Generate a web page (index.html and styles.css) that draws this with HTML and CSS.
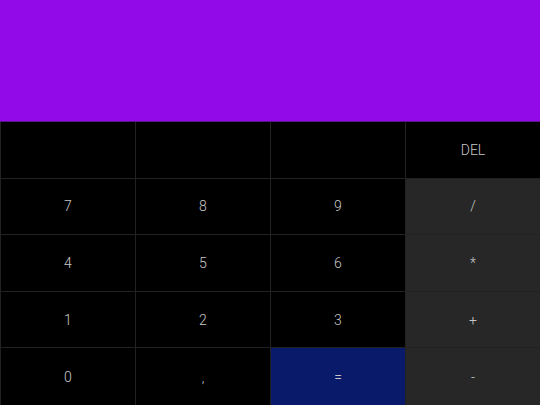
FILE: index.html
```html
<!DOCTYPE html>
<html lang="en">
<head>
    <meta charset="UTF-8">
    <meta name="viewport" content="width=device-width, initial-scale=1.0">
    <title>Calculator</title>
    <link rel="stylesheet" href="styles.css">
</head>
<body>
    <div class="calc">
        <div class="display"></div>

        <div class="keys">
            <div class="key"></div>
            <div class="key"></div>
            <div class="key"></div>
            <div class="key">DEL</div>

            <div class="key">7</div>
            <div class="key">8</div>
            <div class="key">9</div>
            <div class="key op">/</div>

            <div class="key">4</div>
            <div class="key">5</div>
            <div class="key">6</div>
            <div class="key op">*</div>

            <div class="key">1</div>
            <div class="key">2</div>
            <div class="key">3</div>
            <div class="key op">+</div>

            <div class="key">0</div>
            <div class="key">,</div>
            <div class="key equal">=</div>
            <div class="key op">-</div>
        </div>
    </div>
</body>
</html>
```

FILE: styles.css
```css
*{
    margin: 0;
    padding: 0;
    box-sizing: border-box;
}
html, body{
    width: 540px;
    height: 405px;
    background: #000;
    overflow: hidden;
}
.calc{
    height: 405px;
    display: flex;
    flex-direction: column;
    font-family: Roboto, "Liberation Sans", sans-serif;
}
.display{
    height: 122px;
    background: #930ae8;
    border-bottom: 1px solid #5c1488;
}
.keys{
    flex: 1;
    display: grid;
    grid-template-columns: repeat(4, 1fr);
    grid-template-rows: repeat(5, 1fr);
}
.key{
    display: flex;
    align-items: center;
    justify-content: center;
    background: #000;
    color: #c8c8c8;
    font-size: 14px;
    font-weight: 300;
    border-left: 1px solid #222;
    border-bottom: 1px solid #222;
}
.key:nth-last-child(-n+4){
    border-bottom: none;
}
.key.op{
    background: #272727;
}
.key.equal{
    background: #0a1a6b;
}
```
